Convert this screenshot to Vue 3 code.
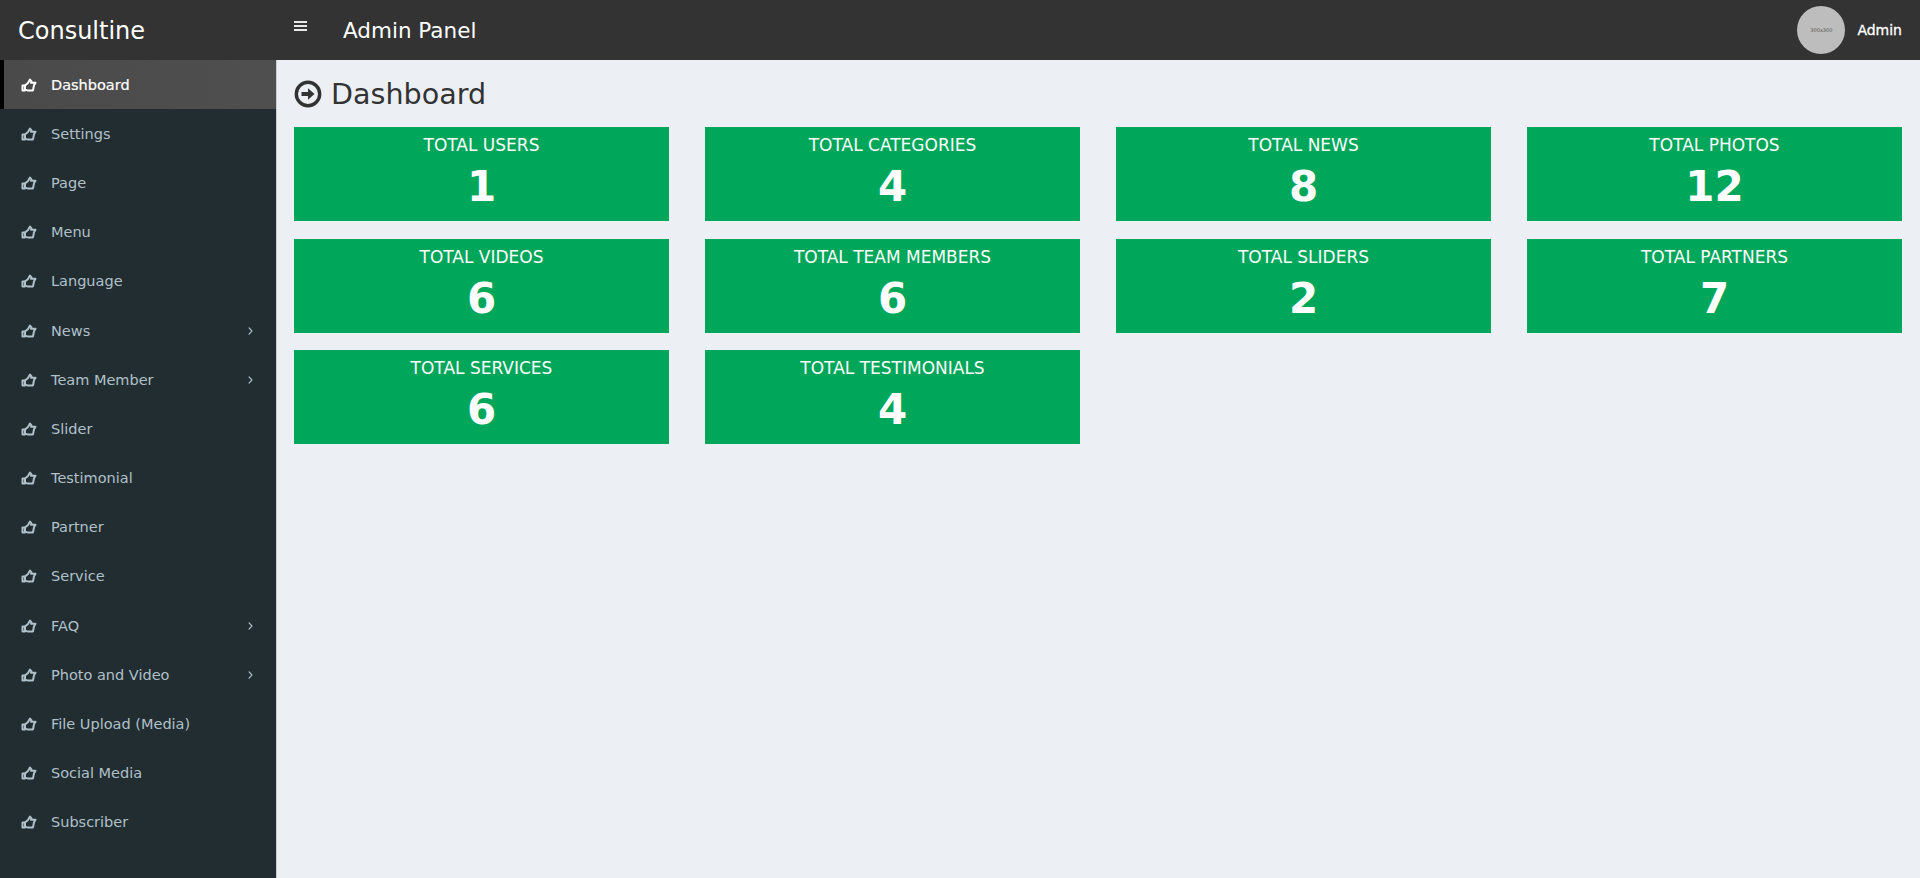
<script setup>
const menu = [
  { label: 'Dashboard', active: true },
  { label: 'Settings' },
  { label: 'Page' },
  { label: 'Menu' },
  { label: 'Language' },
  { label: 'News', arrow: true },
  { label: 'Team Member', arrow: true },
  { label: 'Slider' },
  { label: 'Testimonial' },
  { label: 'Partner' },
  { label: 'Service' },
  { label: 'FAQ', arrow: true },
  { label: 'Photo and Video', arrow: true },
  { label: 'File Upload (Media)' },
  { label: 'Social Media' },
  { label: 'Subscriber' },
]
const cards = [
  ['TOTAL USERS', 1],
  ['TOTAL CATEGORIES', 4],
  ['TOTAL NEWS', 8],
  ['TOTAL PHOTOS', 12],
  ['TOTAL VIDEOS', 6],
  ['TOTAL TEAM MEMBERS', 6],
  ['TOTAL SLIDERS', 2],
  ['TOTAL PARTNERS', 7],
  ['TOTAL SERVICES', 6],
  ['TOTAL TESTIMONIALS', 4],
]
</script>

<template>
  <div class="app">
    <header class="topbar">
      <div class="brand">Consultine</div>
      <div class="bars"><span></span><span></span><span></span></div>
      <div class="panel">Admin Panel</div>
      <div class="user">
        <div class="avatar"><span>300x300</span></div>
        <span class="uname">Admin</span>
      </div>
    </header>
    <div class="body">
      <aside class="side">
        <a v-for="m in menu" :key="m.label" class="item" :class="{ active: m.active }">
          <svg class="hand" viewBox="0 0 16 14" width="16" height="14" fill="none" stroke="currentColor" stroke-width="2" stroke-linejoin="round" stroke-linecap="round">
            <path d="M1.500 7.500h2.500v5H1.500z" />
            <path d="M4 7.500 7 5 9 1.500 10.500 3.400 10 4.800H14.500L13 7.200 12 12.400H6.500L4 11.800" />
          </svg>
          <span class="label">{{ m.label }}</span>
          <svg v-if="m.arrow" class="chev" viewBox="0 0 6 10" width="5" height="8" fill="none" stroke="currentColor" stroke-width="1.500" stroke-linecap="round" stroke-linejoin="round">
            <path d="M1.200 1.200 4.800 5 1.200 8.800" />
          </svg>
        </a>
      </aside>
      <main class="main">
        <h1 class="title">
          <svg class="circle" viewBox="0 0 28 28" width="28" height="28">
            <circle cx="14" cy="14" r="11.700" fill="none" stroke="#333" stroke-width="3.400" />
            <path d="M7.500 12h6.500V8.200L20.500 14 14 19.800V16H7.500z" fill="#333" />
          </svg>
          <span>Dashboard</span>
        </h1>
        <div class="grid">
          <div v-for="c in cards" :key="c[0]" class="card">
            <div class="ctitle">{{ c[0] }}</div>
            <div class="num">{{ c[1] }}</div>
          </div>
        </div>
      </main>
    </div>
  </div>
</template>

<style>
html, body { margin: 0; padding: 0; }
</style>

<style scoped>
.app {
  width: 1920px;
  height: 878px;
  overflow: hidden;
  display: flex;
  flex-direction: column;
  font-family: "DejaVu Sans", Verdana, sans-serif;
  background: #ecf0f5;
}
.topbar {
  height: 60px;
  flex: none;
  background: #333333;
  display: flex;
  align-items: center;
  color: #fff;
}
.brand {
  width: 276px;
  box-sizing: border-box;
  padding-left: 18px;
  font-size: 24px;
  flex: none;
  padding-top: 2px;
}
.bars {
  width: 13px;
  display: flex;
  flex-direction: column;
  gap: 2px;
  margin: -8px 0 0 18px;
}
.bars span { display: block; height: 2px; background: #e8e8e8; }
.panel { font-size: 21.500px; margin-left: 36px; }
.user { margin-left: auto; display: flex; align-items: center; padding-right: 18px; }
.avatar {
  width: 48px;
  height: 48px;
  border-radius: 50%;
  background: #bdbdbd;
  display: flex;
  align-items: center;
  justify-content: center;
  margin-right: 12px;
}
.avatar span { font-size: 5px; color: #555; }
.uname { font-size: 14px; -webkit-text-stroke: 0.3px #fff; }
.body { flex: 1; display: flex; min-height: 0; }
.side {
  width: 277px;
  flex: none;
  box-sizing: border-box;
  background: #222d32;
  border-right: 1px solid #c9cdd1;
}
.item {
  height: 49.200px;
  box-sizing: border-box;
  display: flex;
  align-items: center;
  padding-left: 21px;
  padding-right: 23px;
  color: #b0c0c8;
  font-size: 14.500px;
}
.item.active {
  background: linear-gradient(90deg, #4a4a4a, #4f4f4f);
  border-left: 4px solid #000;
  padding-left: 17px;
  color: #fff;
  -webkit-text-stroke: 0.2px #fff;
}
.hand { flex: none; margin-right: 14px; }
.label { flex: 1; }
.chev { flex: none; }
.main { flex: 1; min-width: 0; padding: 0 18px 0 17px; }
.title {
  margin: 0;
  height: 67px;
  display: flex;
  align-items: center;
  gap: 9px;
  font-size: 28.600px;
  font-weight: 400;
  color: #333;
}
.grid {
  display: grid;
  grid-template-columns: repeat(4, 375px);
  column-gap: 36px;
  row-gap: 17.500px;
}
.card {
  height: 94px;
  background: #00a65a;
  color: #fff;
  text-align: center;
  box-sizing: border-box;
  padding-top: 8px;
}
.ctitle { font-size: 17px; line-height: 20px; }
.num { font-size: 42px; font-weight: 700; line-height: 50px; margin-top: 7px; }
</style>
